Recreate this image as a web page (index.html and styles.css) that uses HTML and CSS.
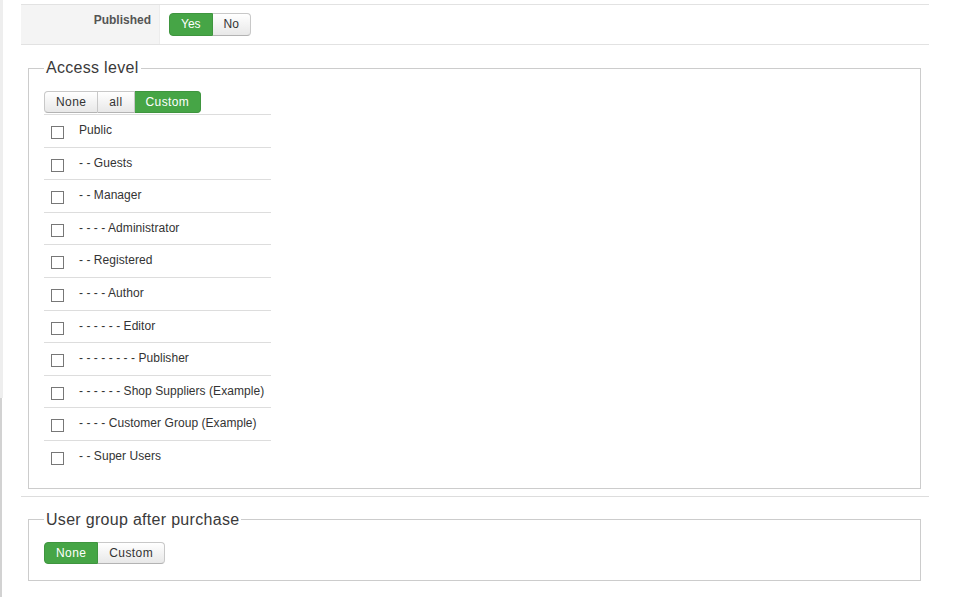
FILE: index.html
```html
<!DOCTYPE html>
<html lang="en">
<head>
  <meta charset="UTF-8">
  <title>Product access</title>
  <link rel="stylesheet" href="styles.css">
</head>
<body>
  <div class="page">
    <div class="edge">
      <div class="edge-top"></div>
      <div class="edge-bottom"></div>
    </div>

    <div class="main">
      <!-- publish switch -->
      <div class="form-row">
        <div class="form-label">Published</div>
        <div class="form-field">
          <div class="btn-group btn-group-lg">
            <button class="btn btn-success">Yes</button>
            <button class="btn">No</button>
          </div>
        </div>
      </div>

      <fieldset class="box">
        <legend>Access level</legend>
        <div class="btn-group">
          <button class="btn">None</button>
          <button class="btn">all</button>
          <button class="btn btn-success">Custom</button>
        </div>
        <div class="group-list">
          <label class="group-row"><input type="checkbox"><span>Public</span></label>
          <label class="group-row"><input type="checkbox"><span>- - Guests</span></label>
          <label class="group-row"><input type="checkbox"><span>- - Manager</span></label>
          <label class="group-row"><input type="checkbox"><span>- - - - Administrator</span></label>
          <label class="group-row"><input type="checkbox"><span>- - Registered</span></label>
          <label class="group-row"><input type="checkbox"><span>- - - - Author</span></label>
          <label class="group-row"><input type="checkbox"><span>- - - - - - Editor</span></label>
          <label class="group-row"><input type="checkbox"><span>- - - - - - - - Publisher</span></label>
          <label class="group-row"><input type="checkbox"><span>- - - - - - Shop Suppliers (Example)</span></label>
          <label class="group-row"><input type="checkbox"><span>- - - - Customer Group (Example)</span></label>
          <label class="group-row"><input type="checkbox"><span>- - Super Users</span></label>
        </div>
      </fieldset>

      <hr class="divider">

      <fieldset class="box box-small">
        <legend>User group after purchase</legend>
        <div class="btn-group">
          <button class="btn btn-success">None</button>
          <button class="btn">Custom</button>
        </div>
      </fieldset>
    </div>
  </div>
</body>
</html>
```

FILE: styles.css
```css
/* Base */
* {
  box-sizing: border-box;
}

body {
  margin: 0;
  background: #fff;
  color: #333;
  font-family: "Liberation Sans", Arial, sans-serif;
  font-size: 12px;
}

.page {
  display: flex;
  min-height: 597px;
}

/* thin frame edge on the left */
.edge {
  width: 3px;
  display: flex;
  flex-direction: column;
}

.edge-top {
  height: 398px;
  background: #eeeeee;
}

.edge-bottom {
  flex: 1;
  width: 2px;
  background: #d2d2d2;
}

.main {
  width: 908px;
  margin-left: 18px;
  padding-top: 4px;
}

/* Published row */
.form-row {
  display: flex;
  border-top: 1px solid #e2e2e2;
  border-bottom: 1px solid #e2e2e2;
  height: 41px;
}

.form-label {
  width: 139px;
  background: #f4f4f4;
  border-right: 1px solid #ececec;
  text-align: right;
  font-weight: bold;
  color: #555;
  padding: 9px 8px 0 0;
  line-height: 13px;
}

.form-field {
  padding: 8px 0 0 8px;
}

/* Buttons */
.btn-group {
  display: inline-flex;
}

.btn {
  font-family: "Liberation Sans", Arial, sans-serif;
  font-size: 12px;
  line-height: 16px;
  letter-spacing: 0.4px;
  padding: 2px 11px;
  color: #333;
  background: linear-gradient(#ffffff, #e8e8e8);
  border: 1px solid #c8c8c8;
  border-bottom-color: #b3b3b3;
  border-left-width: 0;
  cursor: pointer;
}

.btn:first-child {
  border-left-width: 1px;
  border-radius: 4px 0 0 4px;
}

.btn:last-child {
  border-radius: 0 4px 4px 0;
}

.btn-success {
  background: #46a546;
  border-color: #3f953f;
  color: #fff;
}

.btn-group-lg .btn {
  line-height: 17px;
  letter-spacing: 0;
}

.btn-group-lg .btn:first-child {
  margin-left: 1px;
}

/* Fieldsets */
.box {
  margin: 13px 8px 0 7px;
  padding: 13px 15px 15px;
  border: 1px solid #cccccc;
}

.box legend {
  font-size: 16px;
  line-height: 20px;
  letter-spacing: 0.3px;
  padding: 0 2px;
  color: #3a3a3a;
}

.box-small {
  padding: 12px 15px 16px;
}

.group-list {
  width: 227px;
  margin-top: 1px;
}

.group-row {
  display: flex;
  align-items: flex-start;
  height: 32.6px;
  border-top: 1px solid #dddddd;
  cursor: pointer;
}

.group-row input {
  appearance: none;
  -webkit-appearance: none;
  width: 13px;
  height: 13px;
  margin: 11px 0 0 7px;
  border: 1px solid #777;
  background: #fff;
  flex-shrink: 0;
}

.group-row span {
  margin-left: 15px;
  padding-top: 6px;
  line-height: 18px;
  letter-spacing: 0.05px;
}

.divider {
  border: 0;
  border-top: 1px solid #dddddd;
  margin: 7px 0 0;
}

.divider + .box {
  margin-top: 13px;
}
```
